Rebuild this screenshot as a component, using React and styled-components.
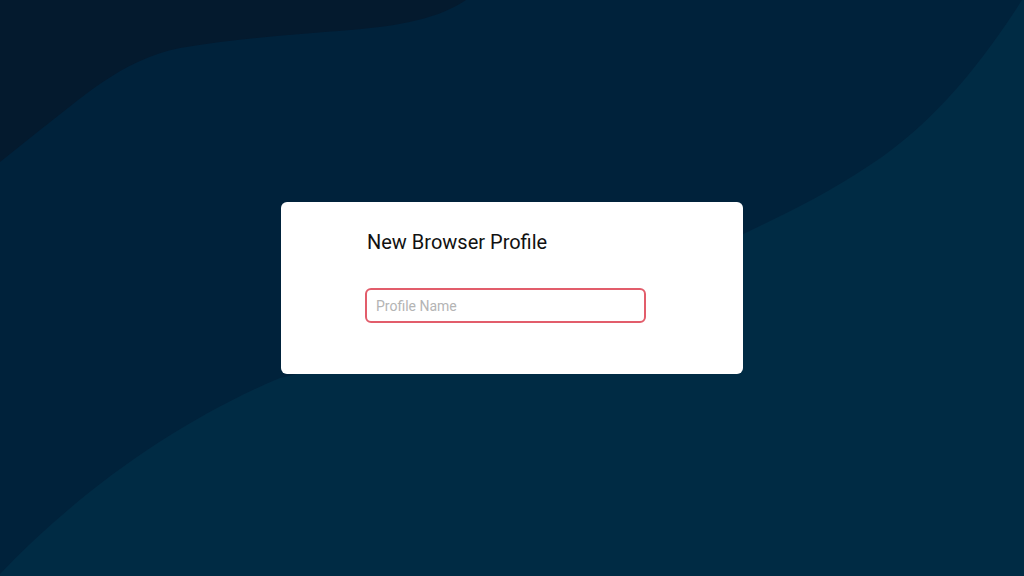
import styled, { createGlobalStyle } from "styled-components";

const GlobalStyle = createGlobalStyle`
  html, body {
    margin: 0;
    padding: 0;
    height: 100%;
    background: #00223b;
    font-family: Roboto, "Liberation Sans", sans-serif;
  }
  #root {
    height: 100%;
  }
`;

export default function App() {
  return (
    <>
      <GlobalStyle />
      <Screen>
        <Waves viewBox="0 0 1024 576" preserveAspectRatio="none">
          <path
            d="M0 0 H466 C440 18 400 26 350 30 C300 34 240 38 180 48 C120 60 80 100 40 130 L0 162 Z"
            fill="#041a2e"
          />
          <path
            d="M1024 0 H1022 C990 50 940 120 870 165 C810 205 760 225 700 255 C560 320 420 345 280 378 C180 420 80 490 0 574 V576 H1024 Z"
            fill="#002b44"
          />
        </Waves>
        <Dialog>
          <Title>New Browser Profile</Title>
          <NameInput placeholder="Profile Name" />
        </Dialog>
      </Screen>
    </>
  );
}

const Screen = styled.div`
  position: relative;
  width: 100%;
  height: 100vh;
  display: flex;
  align-items: center;
  justify-content: center;
  overflow: hidden;
  background: #00223b;
`;

const Waves = styled.svg`
  position: absolute;
  inset: 0;
  width: 100%;
  height: 100%;
  z-index: 0;
`;

const Dialog = styled.div`
  position: relative;
  z-index: 1;
  width: 462px;
  height: 172px;
  box-sizing: border-box;
  padding: 28px 86px 0 86px;
  display: flex;
  flex-direction: column;
  align-items: flex-start;
  gap: 34px;
  background: #ffffff;
  border-radius: 6px;
`;

const Title = styled.div`
  margin: 0;
  font-family: Roboto, "Liberation Sans", sans-serif;
  font-size: 20px;
  line-height: 24px;
  font-weight: 400;
  color: #111111;
`;

const NameInput = styled.input`
  width: 281px;
  height: 35px;
  box-sizing: border-box;
  margin: 0 0 0 -2px;
  padding: 0 9px;
  border: 2px solid #e25d6b;
  border-radius: 6px;
  outline: none;
  background: #ffffff;
  font-family: Roboto, "Liberation Sans", sans-serif;
  font-size: 14px;
  color: #333333;

  &::placeholder {
    color: #b4b4b4;
  }
`;
